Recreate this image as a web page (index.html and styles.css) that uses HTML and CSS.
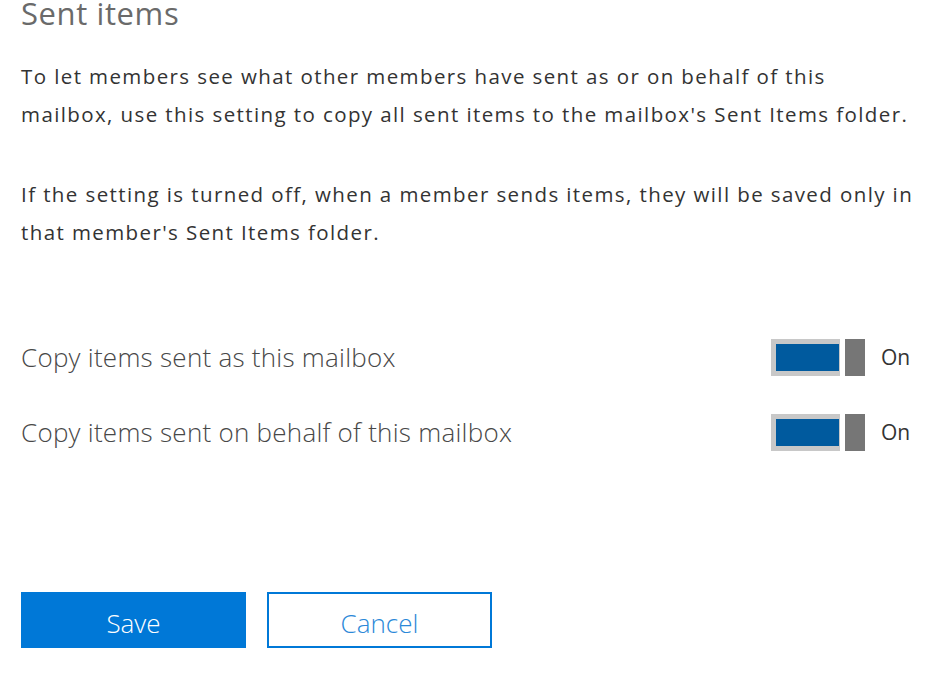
FILE: index.html
```html
<!DOCTYPE html>
<html lang="en">
<head>
<meta charset="utf-8">
<title>Sent items</title>
<link rel="stylesheet" href="styles.css">
</head>
<body>
<main class="page">
  <h1 class="title">Sent items</h1>
  <p class="desc">To let members see what other members have sent as or on behalf of this mailbox, use this setting to copy all sent items to the mailbox's Sent Items folder.</p>
  <p class="desc desc-second">If the setting is turned off, when a member sends items, they will be saved only in that member's Sent Items folder.</p>

  <div class="settings">
    <div class="row">
      <span class="label">Copy items sent as this mailbox</span>
      <div class="switch-group">
        <span class="switch"><span class="track"></span><span class="thumb"></span></span>
        <span class="state">On</span>
      </div>
    </div>
    <div class="row">
      <span class="label">Copy items sent on behalf of this mailbox</span>
      <div class="switch-group">
        <span class="switch"><span class="track"></span><span class="thumb"></span></span>
        <span class="state">On</span>
      </div>
    </div>
  </div>

  <div class="actions">
    <button class="btn btn-primary">Save</button>
    <button class="btn btn-secondary">Cancel</button>
  </div>
</main>
</body>
</html>
```

FILE: styles.css
```css
html, body {
  margin: 0;
  padding: 0;
  background: #ffffff;
}

body {
  font-family: "Open Sans", "Noto Sans", "Liberation Sans", sans-serif;
  color: #333333;
  overflow: hidden;
}

.page {
  width: 900px;
  padding: 0 21px;
  display: flex;
  flex-direction: column;
}

.title {
  margin: -3px 0 0 0;
  font-size: 31px;
  line-height: 32px;
  font-weight: 400;
  color: #6a6a6a;
  letter-spacing: 0.6px;
}

.desc {
  max-width: 898px;
  margin: 28px 0 0 0;
  font-size: 20.5px;
  line-height: 38px;
  letter-spacing: 1.4px;
  color: #333333;
}

.desc-second {
  margin-top: 42px;
}

.settings {
  margin-top: 84px;
  display: flex;
  flex-direction: column;
  gap: 31px;
}

.row {
  display: flex;
  align-items: center;
  justify-content: space-between;
  height: 44px;
}

.label {
  font-size: 26px;
  font-weight: 300;
  letter-spacing: 0.25px;
  color: #484848;
}

.switch-group {
  width: 150px;
  display: flex;
  align-items: center;
  gap: 16px;
}

.switch {
  display: flex;
  gap: 5px;
}

.track {
  width: 63px;
  height: 27px;
  background: #005a9e;
  border: 5px solid #c8c8c8;
  border-right-width: 1px;
}

.thumb {
  width: 20px;
  height: 37px;
  background: #767676;
}

.state {
  font-size: 21px;
  color: #333333;
}

.actions {
  margin-top: 138px;
  display: flex;
  gap: 21px;
}

.btn {
  width: 225px;
  height: 56px;
  padding: 6px 0 0 0;
  font-family: "Open Sans", "Noto Sans", sans-serif;
  font-size: 26px;
  font-weight: 300;
  line-height: 50px;
  cursor: pointer;
}

.btn-primary {
  background: #0078d7;
  color: #ffffff;
  border: none;
}

.btn-secondary {
  background: #ffffff;
  color: #2b88d8;
  border: 2px solid #0078d7;
  line-height: 46px;
}
```
